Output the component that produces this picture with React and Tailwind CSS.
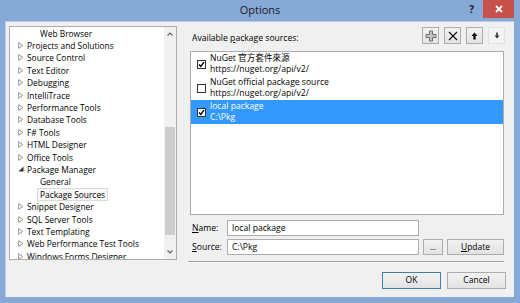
import React from "react";

const tree = [
  { t: "Web Browser", lvl: 1 },
  { t: "Projects and Solutions", a: "c" },
  { t: "Source Control", a: "c" },
  { t: "Text Editor", a: "c" },
  { t: "Debugging", a: "c" },
  { t: "IntelliTrace", a: "c" },
  { t: "Performance Tools", a: "c" },
  { t: "Database Tools", a: "c" },
  { t: "F# Tools", a: "c" },
  { t: "HTML Designer", a: "c" },
  { t: "Office Tools", a: "c" },
  { t: "Package Manager", a: "o" },
  { t: "General", lvl: 1 },
  { t: "Package Sources", lvl: 1, sel: true },
  { t: "Snippet Designer", a: "c" },
  { t: "SQL Server Tools", a: "c" },
  { t: "Text Templating", a: "c" },
  { t: "Web Performance Test Tools", a: "c" },
  { t: "Windows Forms Designer", a: "c" },
];

function Arrow({ a }) {
  if (a === "o")
    return (
      <svg width="6" height="6" viewBox="0 0 6 6" className="shrink-0">
        <path d="M5.5 0.5 L5.5 5.5 L0.5 5.5 Z" fill="#333" />
      </svg>
    );
  return (
    <svg width="6" height="7" viewBox="0 0 6 7" className="shrink-0">
      <path d="M0.7 0.7 L4.8 3.5 L0.7 6.3 Z" fill="none" stroke="#8a8a8a" strokeWidth="0.9" />
    </svg>
  );
}

function Check({ on }) {
  return (
    <div className="w-[9px] h-[9px] border border-[#333] bg-white flex items-center justify-center shrink-0">
      {on && (
        <svg width="7" height="7" viewBox="0 0 7 7">
          <path d="M1 3.5 L2.8 5.5 L6 1.2" fill="none" stroke="#000" strokeWidth="1.4" />
        </svg>
      )}
    </div>
  );
}

function Btn({ children, className = "" }) {
  return (
    <div
      className={
        "h-[17px] border border-[#adadad] bg-gradient-to-b from-[#f2f2f2] to-[#e3e3e3] flex items-center justify-center text-[8.5px] text-black " +
        className
      }
    >
      {children}
    </div>
  );
}

export default function App() {
  return (
    <div className="w-[520px] h-[303px] bg-[#86a9d6] flex flex-col font-['Open_Sans','Noto_Sans_CJK_TC',sans-serif] text-black overflow-hidden">
      {/* title bar */}
      <div className="h-[21px] grid grid-cols-[1fr_auto_1fr] shrink-0">
        <div />
        <div className="text-[11px] leading-[20px] text-[#1a1a1a]">Options</div>
        <div className="flex justify-end items-start">
          <div className="text-[10px] font-bold leading-[18px] text-[#222] mr-[9px]">?</div>
          <div className="w-[31px] h-[18px] bg-[#c7504a] flex items-center justify-center mr-[6px]">
            <svg width="8" height="8" viewBox="0 0 8 8">
              <path d="M1 1 L7 7 M7 1 L1 7" stroke="#fff" strokeWidth="1.8" />
            </svg>
          </div>
        </div>
      </div>

      {/* content */}
      <div className="ml-[5px] mr-[6px] h-[276px] bg-[#f0f0f0] border-t border-l border-[#b9cce6] flex pl-[3px] pt-[4px]">
        {/* left tree panel */}
        <div className="w-[168px] h-[234px] bg-white border border-[#acacac] flex overflow-hidden shrink-0">
          <div className="flex-1 flex flex-col overflow-hidden text-[8.4px]">
            {tree.map((r, i) => (
              <div
                key={i}
                className={
                  "h-[12.4px] shrink-0 flex items-center whitespace-nowrap " +
                  (r.lvl ? "pl-[27px]" : "pl-[8px]")
                }
              >
                {!r.lvl && (
                  <div className="w-[6px] flex justify-center">
                    <Arrow a={r.a} />
                  </div>
                )}
                <span
                  className={
                    "leading-[11px] px-[2px] " +
                    (r.sel ? "border border-[#dadada] bg-[#f7f7f7]" : "border border-transparent")
                  }
                >
                  {r.t}
                </span>
              </div>
            ))}
          </div>
          {/* scrollbar */}
          <div className="w-[12px] bg-[#f0f0f0] flex flex-col items-center shrink-0">
            <div className="h-[12px] flex items-center justify-center pt-[2px]">
              <svg width="6" height="4" viewBox="0 0 6 4">
                <path d="M0.5 3.5 L3 1 L5.5 3.5" fill="none" stroke="#606060" strokeWidth="1.1" />
              </svg>
            </div>
            <div className="h-[88px]" />
            <div className="w-[10px] h-[108px] bg-[#cdcdcd]" />
            <div className="flex-1" />
            <div className="h-[12px] flex items-center justify-center pb-[2px]">
              <svg width="6" height="4" viewBox="0 0 6 4">
                <path d="M0.5 0.5 L3 3 L5.5 0.5" fill="none" stroke="#606060" strokeWidth="1.1" />
              </svg>
            </div>
          </div>
        </div>

        {/* right column */}
        <div className="w-[318px] ml-[11px] flex flex-col">
          <div className="h-[24px] flex items-start">
            <div className="text-[8.6px] leading-[12px] mt-[6px] ml-[4px] flex-1">
              Available <span className="underline">p</span>ackage sources:
            </div>
            <div className="flex gap-[5px] mt-[1px] mr-[1px]">
              <Btn className="w-[17px]">
                <svg width="12" height="12" viewBox="0 0 12 12">
                  <path
                    d="M4.5 1 H7.5 V4.5 H11 V7.5 H7.5 V11 H4.5 V7.5 H1 V4.5 H4.5 Z"
                    fill="#c4c4c4"
                    stroke="#6e6e6e"
                    strokeWidth="1"
                  />
                </svg>
              </Btn>
              <Btn className="w-[17px]">
                <svg width="10" height="10" viewBox="0 0 10 10">
                  <path d="M1 1 L9 9 M9 1 L1 9" stroke="#111" strokeWidth="1.1" />
                </svg>
              </Btn>
              <Btn className="w-[17px]">
                <svg width="7" height="8" viewBox="0 0 7 8">
                  <path d="M3.5 0.5 L6.5 4 H4.6 V7.5 H2.4 V4 H0.5 Z" fill="#000" />
                </svg>
              </Btn>
              <div className="w-[17px] h-[17px] border border-[#e2e2e2] bg-[#f3f3f3] flex items-center justify-center">
                <svg width="6" height="7" viewBox="0 0 6 7">
                  <path d="M2.2 0.5 H3.8 V3.6 H5.5 L3 6.5 L0.5 3.6 H2.2 Z" fill="#333" />
                </svg>
              </div>
            </div>
          </div>

          {/* listbox */}
          <div className="ml-[2px] w-[314px] h-[164px] mt-[1px] bg-white border border-[#abadb3] flex flex-col text-[8.6px]">
            {[
              { on: true, a: "NuGet 官方套件來源", b: "https://nuget.org/api/v2/" },
              { on: false, a: "NuGet official package source", b: "https://nuget.org/api/v2/" },
              { on: true, a: "local package", b: "C:\\Pkg", sel: true },
            ].map((r, i) => (
              <div
                key={i}
                className={
                  "h-[24px] flex items-center pl-[6px] gap-[4px] " +
                  (r.sel ? "bg-[#3399ff] text-white" : "")
                }
              >
                <Check on={r.on} />
                <div className="leading-[11.5px] whitespace-nowrap">
                  <div>{r.a}</div>
                  <div>{r.b}</div>
                </div>
              </div>
            ))}
          </div>

          {/* name / source */}
          <div className="mt-[5px] flex items-center text-[8.6px]">
            <div className="w-[39px] pl-[4px]">
              <span className="underline">N</span>ame:
            </div>
            <div className="w-[192px] h-[16px] bg-white border border-[#abadb3] pl-[4px] leading-[14px]">
              local package
            </div>
          </div>
          <div className="mt-[3px] flex items-center text-[8.6px]">
            <div className="w-[39px] pl-[4px]">
              <span className="underline">S</span>ource:
            </div>
            <div className="w-[192px] h-[16px] bg-white border border-[#abadb3] pl-[4px] leading-[14px]">
              C:\Pkg
            </div>
            <Btn className="w-[20px] ml-[4px] !h-[16px]">...</Btn>
            <Btn className="w-[57px] ml-[4px] !h-[16px]">
              <span>
                <span className="underline">U</span>pdate
              </span>
            </Btn>
          </div>

          {/* separator */}
          <div className="mt-[6px] w-[316px] h-[2px] border-t border-[#a0a0a0] border-b border-b-white" />

          {/* OK / Cancel */}
          <div className="mt-[9px] flex justify-end gap-[6px]">
            <Btn className="w-[59px] !border-[#3c7fb1]">OK</Btn>
            <Btn className="w-[59px]">Cancel</Btn>
          </div>
        </div>
      </div>
    </div>
  );
}
